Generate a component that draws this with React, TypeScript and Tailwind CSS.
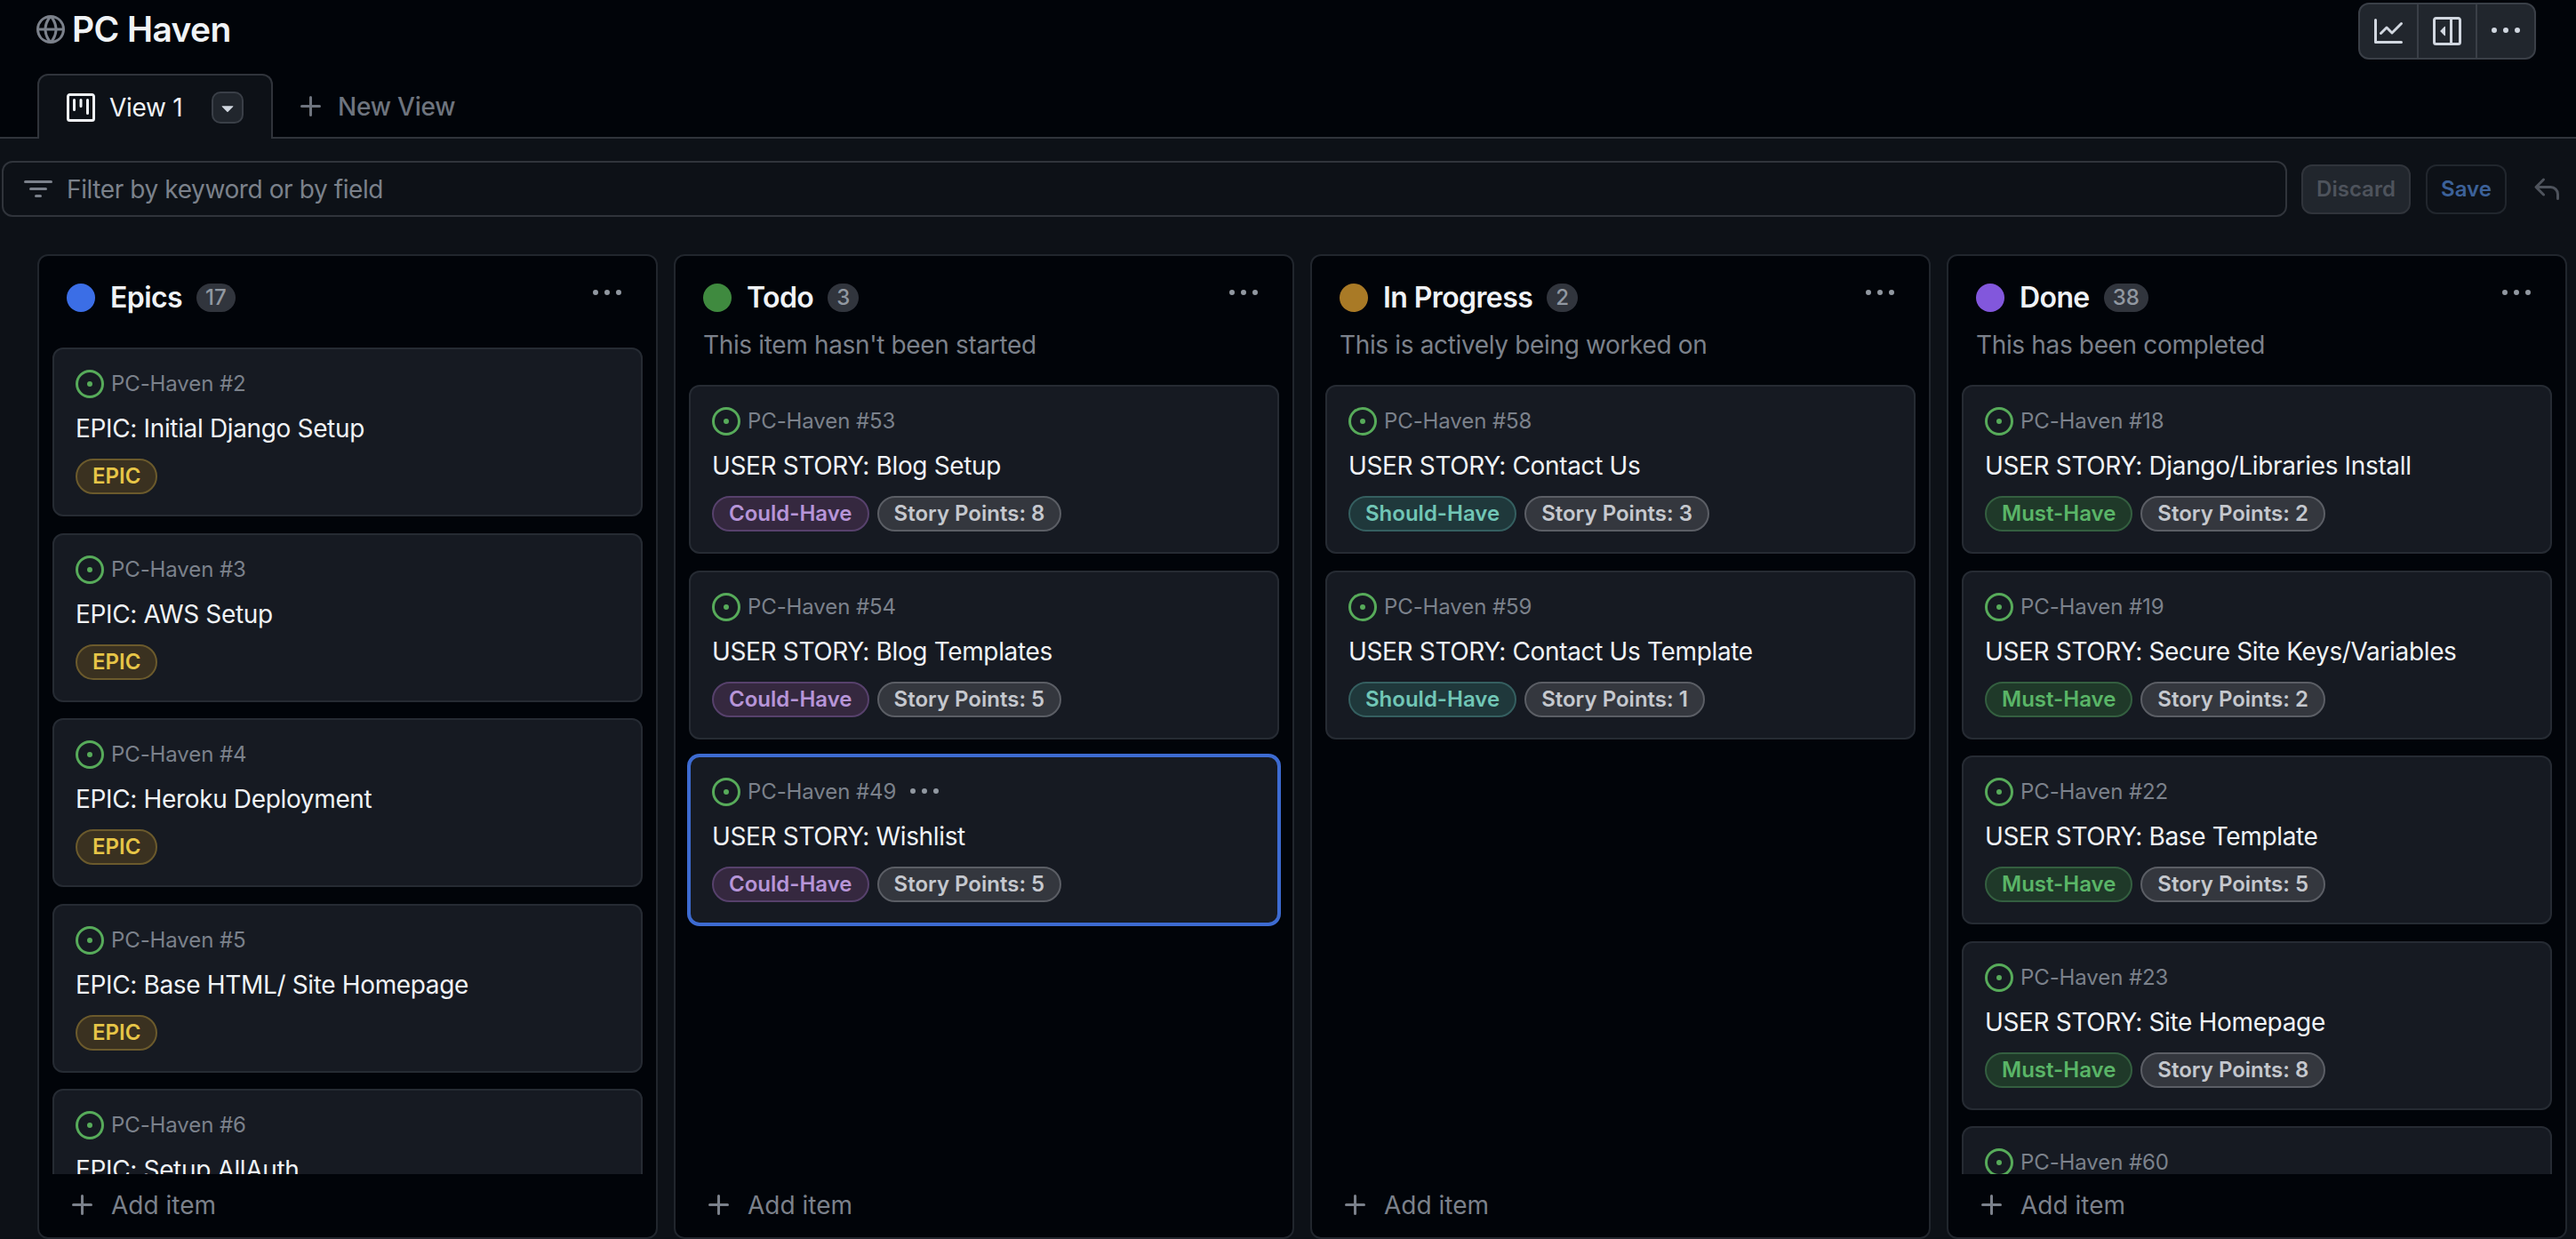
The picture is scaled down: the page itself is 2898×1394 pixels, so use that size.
type IconProps = { className?: string };

// Octicons, 16px grid (the 24px set in react-icons draws thinner strokes than the reference)
function Octicon({ className, d }: IconProps & { d: string }) {
  return (
    <svg viewBox="0 0 16 16" fill="currentColor" className={`shrink-0 ${className ?? ""}`}>
      <path d={d} />
    </svg>
  );
}

const GlobeIcon = (p: IconProps) => (
  <Octicon {...p} d="M8 0a8 8 0 1 1 0 16A8 8 0 0 1 8 0ZM5.78 8.75a9.64 9.64 0 0 0 1.363 4.177c.255.426.542.832.857 1.215.245-.296.551-.705.857-1.215A9.64 9.64 0 0 0 10.22 8.75Zm4.44-1.5a9.64 9.64 0 0 0-1.363-4.177c-.307-.51-.612-.919-.857-1.215a9.927 9.927 0 0 0-.857 1.215A9.64 9.64 0 0 0 5.78 7.25Zm-5.944 1.5H1.543a6.507 6.507 0 0 0 4.666 5.5c-.123-.181-.24-.365-.352-.552-.715-1.192-1.437-2.874-1.581-4.948Zm-2.733-1.5h2.733c.144-2.074.866-3.756 1.58-4.948.12-.197.237-.381.353-.552a6.507 6.507 0 0 0-4.666 5.5Zm10.181 1.5c-.144 2.074-.866 3.756-1.58 4.948-.12.197-.237.381-.353.552a6.507 6.507 0 0 0 4.666-5.5Zm2.733-1.5a6.507 6.507 0 0 0-4.666-5.5c.123.181.24.365.353.552.714 1.192 1.436 2.874 1.58 4.948Z" />
);
const IssueIcon = (p: IconProps) => (
  <Octicon {...p} d="M8 9.5a1.5 1.5 0 1 0 0-3 1.5 1.5 0 0 0 0 3ZM8 0a8 8 0 1 1 0 16A8 8 0 0 1 8 0ZM1.5 8a6.5 6.5 0 1 0 13 0 6.5 6.5 0 0 0-13 0Z" />
);
const KebabIcon = (p: IconProps) => (
  <Octicon {...p} d="M8 9a1.5 1.5 0 1 0 0-3 1.5 1.5 0 0 0 0 3ZM1.5 9a1.5 1.5 0 1 0 0-3 1.5 1.5 0 0 0 0 3Zm13 0a1.5 1.5 0 1 0 0-3 1.5 1.5 0 0 0 0 3Z" />
);
const PlusIcon = (p: IconProps) => (
  <Octicon {...p} d="M7.75 2a.75.75 0 0 1 .75.75V7h4.25a.75.75 0 0 1 0 1.5H8.5v4.25a.75.75 0 0 1-1.5 0V8.5H2.75a.75.75 0 0 1 0-1.5H7V2.75A.75.75 0 0 1 7.75 2Z" />
);
const FilterIcon = (p: IconProps) => (
  <Octicon {...p} d="M.75 3h14.5a.75.75 0 0 1 0 1.5H.75a.75.75 0 0 1 0-1.5ZM3 7.75A.75.75 0 0 1 3.75 7h8.5a.75.75 0 0 1 0 1.5h-8.5A.75.75 0 0 1 3 7.75Zm3 4a.75.75 0 0 1 .75-.75h2.5a.75.75 0 0 1 0 1.5h-2.5a.75.75 0 0 1-.75-.75Z" />
);
const GraphIcon = (p: IconProps) => (
  <Octicon {...p} d="M1.5 1.75V13.5h13.75a.75.75 0 0 1 0 1.5H.75a.75.75 0 0 1-.75-.75V1.75a.75.75 0 0 1 1.5 0Zm14.28 2.53-5.25 5.25a.75.75 0 0 1-1.06 0L7 7.06 4.28 9.78a.751.751 0 0 1-1.042-.018.751.751 0 0 1-.018-1.042l3.25-3.25a.75.75 0 0 1 1.06 0L10 7.94l4.72-4.72a.751.751 0 0 1 1.042.018.751.751 0 0 1 .018 1.042Z" />
);
const SidebarIcon = (p: IconProps) => (
  <Octicon {...p} d="m4.177 7.823 2.396-2.396A.25.25 0 0 1 7 5.604v4.792a.25.25 0 0 1-.427.177L4.177 8.177a.25.25 0 0 1 0-.354ZM0 1.75C0 .784.784 0 1.75 0h12.5C15.216 0 16 .784 16 1.75v12.5A1.75 1.75 0 0 1 14.25 16H1.75A1.75 1.75 0 0 1 0 14.25Zm1.75-.25a.25.25 0 0 0-.25.25v12.5c0 .138.112.25.25.25H9.5v-13Zm12.5 13a.25.25 0 0 0 .25-.25V1.75a.25.25 0 0 0-.25-.25H11v13Z" />
);
const ReplyIcon = (p: IconProps) => (
  <Octicon {...p} d="M6.78 1.97a.75.75 0 0 1 0 1.06L3.81 6h6.44A4.75 4.75 0 0 1 15 10.75v2.5a.75.75 0 0 1-1.5 0v-2.5a3.25 3.25 0 0 0-3.25-3.25H3.81l2.97 2.97a.749.749 0 0 1-.326 1.275.749.749 0 0 1-.734-.215L1.47 7.28a.75.75 0 0 1 0-1.06l4.25-4.25a.75.75 0 0 1 1.06 0Z" />
);
const ProjectIcon = (p: IconProps) => (
  <Octicon {...p} d="M1.75 0h12.5C15.216 0 16 .784 16 1.75v12.5A1.75 1.75 0 0 1 14.25 16H1.75A1.75 1.75 0 0 1 0 14.25V1.75C0 .784.784 0 1.75 0ZM1.5 1.75v12.5c0 .138.112.25.25.25h12.5a.25.25 0 0 0 .25-.25V1.75a.25.25 0 0 0-.25-.25H1.75a.25.25 0 0 0-.25.25ZM11.75 3a.75.75 0 0 1 .75.75v7.5a.75.75 0 0 1-1.5 0v-7.5a.75.75 0 0 1 .75-.75Zm-8.25.75a.75.75 0 0 1 1.5 0v5.5a.75.75 0 0 1-1.5 0ZM8 3a.75.75 0 0 1 .75.75v3.5a.75.75 0 0 1-1.5 0v-3.5A.75.75 0 0 1 8 3Z" />
);
const TriangleDownIcon = (p: IconProps) => (
  <Octicon {...p} d="m4.427 7.427 3.396 3.396a.25.25 0 0 0 .354 0l3.396-3.396A.25.25 0 0 0 11.396 7H4.604a.25.25 0 0 0-.177.427Z" />
);

type Item = { id: number; title?: string; label?: string; points?: number; selected?: boolean };

const labelStyles: Record<string, string> = {
  EPIC: "bg-[#3a3120] border-[#6b5a2c] text-[#e6c547]",
  "Could-Have": "bg-[#35283f] border-[#57416c] text-[#b795d8]",
  "Should-Have": "bg-[#1f383b] border-[#355f60] text-[#71c6b6]",
  "Must-Have": "bg-[#1f3929] border-[#345f40] text-[#5ab567]",
};

const columns: {
  name: string;
  count: number;
  dot: string;
  description?: string;
  items: Item[];
}[] = [
  {
    name: "Epics",
    count: 17,
    dot: "bg-[#3b6ee6]",
    items: [
      { id: 2, title: "EPIC: Initial Django Setup", label: "EPIC" },
      { id: 3, title: "EPIC: AWS Setup", label: "EPIC" },
      { id: 4, title: "EPIC: Heroku Deployment", label: "EPIC" },
      { id: 5, title: "EPIC: Base HTML/ Site Homepage", label: "EPIC" },
      { id: 6, title: "EPIC: Setup AllAuth" },
    ],
  },
  {
    name: "Todo",
    count: 3,
    dot: "bg-[#3f8a3f]",
    description: "This item hasn't been started",
    items: [
      { id: 53, title: "USER STORY: Blog Setup", label: "Could-Have", points: 8 },
      { id: 54, title: "USER STORY: Blog Templates", label: "Could-Have", points: 5 },
      { id: 49, title: "USER STORY: Wishlist", label: "Could-Have", points: 5, selected: true },
    ],
  },
  {
    name: "In Progress",
    count: 2,
    dot: "bg-[#a97a26]",
    description: "This is actively being worked on",
    items: [
      { id: 58, title: "USER STORY: Contact Us", label: "Should-Have", points: 3 },
      { id: 59, title: "USER STORY: Contact Us Template", label: "Should-Have", points: 1 },
    ],
  },
  {
    name: "Done",
    count: 38,
    dot: "bg-[#8257dc]",
    description: "This has been completed",
    items: [
      { id: 18, title: "USER STORY: Django/Libraries Install", label: "Must-Have", points: 2 },
      { id: 19, title: "USER STORY: Secure Site Keys/Variables", label: "Must-Have", points: 2 },
      { id: 22, title: "USER STORY: Base Template", label: "Must-Have", points: 5 },
      { id: 23, title: "USER STORY: Site Homepage", label: "Must-Have", points: 8 },
      // cut off by the footer in the reference, only the id line shows
      { id: 60 },
    ],
  },
];

function Pill({ className, children }: { className: string; children: React.ReactNode }) {
  return (
    <span className={`flex h-[40px] items-center rounded-full border-2 px-[17px] text-[24px] font-semibold ${className}`}>
      {children}
    </span>
  );
}

function Card({ item }: { item: Item }) {
  return (
    <div
      className={`h-[190px] shrink-0 rounded-[12px] border-2 bg-[#161a22] px-[24px] pt-[23px] ${
        item.selected ? "border-[#3d6bd1] ring-[2px] ring-[#3d6bd1]" : "border-[#262b33]"
      }`}
    >
      <div className="flex h-[32px] items-center text-[24px] tracking-[-0.1px] text-[#7b818b]">
        <IssueIcon className="mr-[8px] h-[32px] w-[32px] text-[#57ab5a]" />
        <span>PC-Haven #{item.id}</span>
        {item.selected && <KebabIcon className="ml-[16px] h-[32px] w-[32px] text-[#9198a1]" />}
      </div>
      {item.title && (
        <div className="mt-[16px] h-[36px] text-[28px] leading-[36px] tracking-[-0.35px] text-[#f0f3f6]">{item.title}</div>
      )}
      {item.label && (
        <div className="mt-[16px] flex gap-[9px]">
          <Pill className={labelStyles[item.label]}>{item.label}</Pill>
          {item.points !== undefined && (
            <Pill className="border-[#5b5e65] bg-[#34373e] text-[#c5c8ce]">Story Points: {item.points}</Pill>
          )}
        </div>
      )}
    </div>
  );
}

function Column({ column }: { column: (typeof columns)[number] }) {
  return (
    <div className="flex h-full w-[698px] shrink-0 flex-col rounded-[12px] border-2 border-[#21262d] bg-[#010409]">
      <div className="pr-[8px] pl-[31px] pt-[31px]">
        <div className="flex h-[32px] items-center">
          <span className={`h-[32px] w-[32px] rounded-full ${column.dot}`} />
          <span className="ml-[17px] text-[32px] font-semibold tracking-[-0.6px] text-[#f0f3f6]">{column.name}</span>
          <span className="ml-[16px] flex h-[32px] min-w-[32px] items-center justify-center rounded-full bg-[#31353d] px-[10px] text-[24px] font-medium text-[#9198a1]">
            {column.count}
          </span>
          <KebabIcon className="ml-auto mr-[31px] -mt-[10px] h-[32px] w-[32px] text-[#9198a1]" />
        </div>
        {column.description && (
          <div className="mt-[20px] h-[35px] text-[28px] leading-[35px] tracking-[-0.35px] text-[#7b818b]">{column.description}</div>
        )}
      </div>
      <div
        className={`flex min-h-0 flex-1 flex-col gap-[18.5px] overflow-hidden px-[15px] ${
          column.description ? "mt-[27px]" : "mt-[40px]"
        }`}
      >
        {column.items.map((item) => (
          <Card key={item.id} item={item} />
        ))}
      </div>
      <div className="flex h-[71px] shrink-0 items-center pb-[1px] pl-[33px] text-[28px] text-[#7b818b]">
        <PlusIcon className="mr-[16px] h-[32px] w-[32px]" />
        Add item
      </div>
    </div>
  );
}

export default function App() {
  return (
    <div className="flex h-[1394px] flex-col overflow-hidden bg-[#010409] font-['Inter',sans-serif]">
      <div className="flex h-[83px] shrink-0 items-start justify-between pl-[41px] pr-[45px]">
        <div className="mt-[15px] flex items-center">
          <GlobeIcon className="mr-[8px] h-[32px] w-[32px] text-[#7b818b]" />
          <h1 className="text-[39px] leading-[36px] font-semibold tracking-[-0.6px] text-[#f0f3f6]">PC Haven</h1>
        </div>
        <div className="mt-[3px] flex h-[64px] rounded-[12px] border-2 border-[#3a3f47] bg-[#21262d] text-[#d1d7e0]">
          <button className="flex w-[66px] items-center justify-center border-r-2 border-[#3a3f47]">
            <GraphIcon className="h-[32px] w-[32px]" />
          </button>
          <button className="flex w-[66px] items-center justify-center border-r-2 border-[#3a3f47]">
            <SidebarIcon className="h-[32px] w-[32px]" />
          </button>
          <button className="flex w-[64px] items-center justify-center">
            <KebabIcon className="h-[32px] w-[32px]" />
          </button>
        </div>
      </div>

      <div className="flex h-[73px] shrink-0 border-b-2 border-[#30343b] pl-[42px]">
        <div className="-mb-[2px] flex h-[73px] w-[265px] items-center rounded-t-[12px] border-2 border-b-0 border-[#30343b] bg-[#0d1117] pl-[31px] pr-[31px] text-[28px] tracking-[-0.3px] text-[#f0f3f6]">
          <ProjectIcon className="mr-[16px] h-[32px] w-[32px]" />
          View 1
          <span className="ml-auto flex h-[36px] w-[36px] items-center justify-center rounded-[10px] border-2 border-[#3a3f47] bg-[#21262d] text-[#d1d7e0]">
            <TriangleDownIcon className="h-[28px] w-[28px]" />
          </span>
        </div>
        <div className="ml-[27px] flex items-center pt-[2px] text-[28px] font-medium tracking-[-0.2px] text-[#6e747e]">
          <PlusIcon className="mr-[14px] h-[32px] w-[32px]" />
          New View
        </div>
      </div>

      <div className="flex min-h-0 flex-1 flex-col bg-[#0d1117]">
        <div className="flex items-center pt-[25px] pl-[2px]">
          <div className="flex h-[63px] w-[2571px] items-center rounded-[12px] border-2 border-[#30343b] pl-[23px] text-[28px] tracking-[-0.4px] text-[#7b818b]">
            <FilterIcon className="mr-[16px] h-[32px] w-[32px]" />
            Filter by keyword or by field
          </div>
          <button className="ml-[16px] flex h-[56px] w-[123px] items-center justify-center rounded-[12px] border-2 border-[#30343b] bg-[#21262d] text-[24px] font-semibold text-[#4e535c]">
            Discard
          </button>
          <button className="ml-[17px] flex h-[56px] w-[91px] items-center justify-center rounded-[12px] border-2 border-[#21262d] bg-[#0d1117] text-[24px] font-semibold text-[#3c6199]">
            Save
          </button>
          <ReplyIcon className="ml-[29px] h-[32px] w-[32px] text-[#4e535c]" />
        </div>
        <div className="mt-[42px] flex min-h-0 flex-1 gap-[18px] pl-[42px]">
          {columns.map((column) => (
            <Column key={column.name} column={column} />
          ))}
        </div>
      </div>
    </div>
  );
}
